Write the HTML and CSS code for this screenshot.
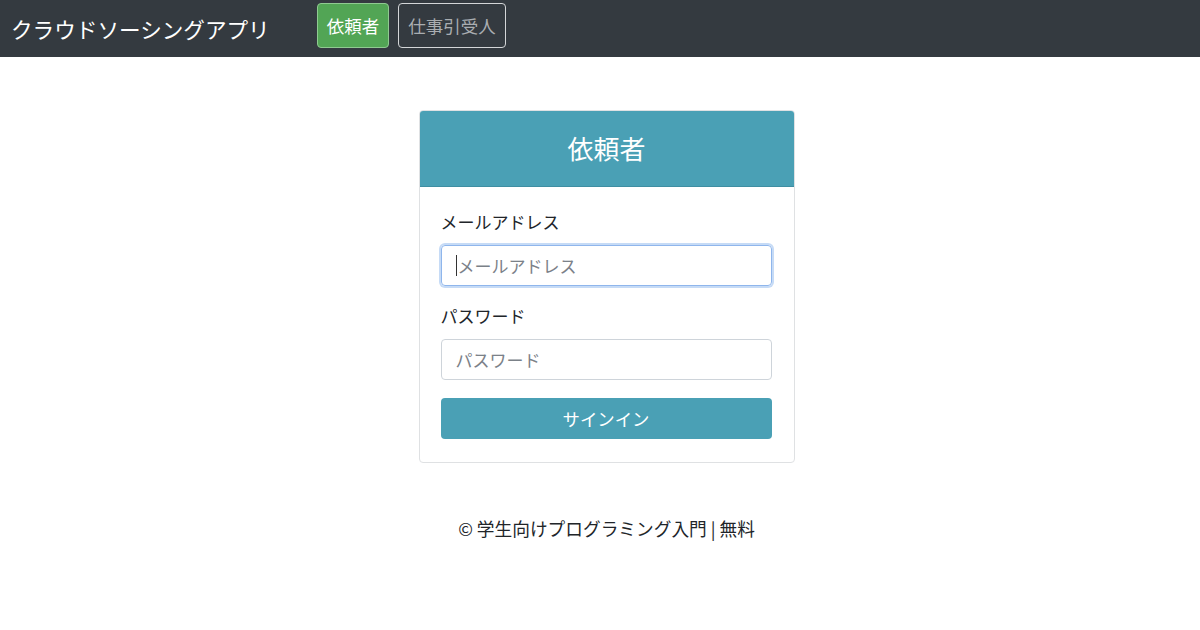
FILE: index.html
```html
<!DOCTYPE html>
<html lang="ja">
<head>
    <meta charset="UTF-8">
    <meta name="viewport" content="width=device-width, initial-scale=1.0">
    <title>クラウドソーシングアプリ</title>
    <link rel="stylesheet" href="styles.css">
</head>
<body>
    <nav class="navbar">
        <a class="brand" href="#">クラウドソーシングアプリ</a>
        <div class="nav-buttons">
            <a class="btn btn-success" href="#">依頼者</a>
            <a class="btn btn-outline" href="#">仕事引受人</a>
        </div>
    </nav>

    <main class="content">
        <div class="card">
            <div class="card-header">依頼者</div>
            <form class="card-body">
                <label class="form-label" for="email">メールアドレス</label>
                <div class="input focus">
                    <span class="caret"></span>
                    <span class="placeholder">メールアドレス</span>
                </div>
                <label class="form-label" for="password">パスワード</label>
                <div class="input">
                    <span class="placeholder">パスワード</span>
                </div>
                <button class="btn-signin" type="button">サインイン</button>
            </form>
        </div>

        <footer class="footer">© 学生向けプログラミング入門 | 無料</footer>
    </main>
</body>
</html>
```

FILE: styles.css
```css
:root {
    --dark: #343a40;
    --info: #4aa0b5;
    --success: #52a555;
    --text: #212529;
}

* {
    margin: 0;
    padding: 0;
    box-sizing: border-box;
}

body {
    font-family: "Noto Sans CJK JP", "Noto Sans", sans-serif;
    background: #fff;
    color: var(--text);
    width: 1200px;
    height: 630px;
    overflow: hidden;
}

/* top bar */
.navbar {
    height: 57px;
    background: var(--dark);
    display: flex;
    align-items: center;
    padding: 0 11px;
}

.brand {
    color: #fff;
    text-decoration: none;
    font-size: 21.6px;
    margin-right: 47px;
}

.nav-buttons {
    display: flex;
    gap: 9px;
    align-items: center;
    margin-top: -7px;
}

.btn {
    display: inline-flex;
    align-items: center;
    justify-content: center;
    height: 45px;
    padding: 0 9px;
    border-radius: 4px;
    font-size: 17.5px;
    text-decoration: none;
}

.btn-success {
    background: var(--success);
    border: 1px solid #8fca91;
    color: #fff;
}

.btn-outline {
    border: 1px solid #d4d6d8;
    color: #a9adb1;
}

/* card */
.content {
    display: flex;
    flex-direction: column;
    align-items: center;
    padding: 53px 0 0 13px;
}

.card {
    width: 376px;
    border: 1px solid #dfe1e3;
    border-radius: 4px;
    overflow: hidden;
}

.card-header {
    height: 76px;
    padding-bottom: 3px;
    background: var(--info);
    color: #fff;
    font-size: 26px;
    display: flex;
    align-items: center;
    justify-content: center;
    border-bottom: 1px solid #3f8ea2;
}

.card-body {
    padding: 23px 22px 23px 21px;
    display: flex;
    flex-direction: column;
}

.form-label {
    font-size: 17px;
    line-height: 24px;
    margin-bottom: 11px;
}

.input {
    height: 41px;
    border: 1px solid #ced4da;
    border-radius: 4px;
    display: flex;
    align-items: center;
    padding: 0 14px;
    margin-bottom: 18px;
    font-size: 17px;
}

.input.focus {
    border-color: #8fb6ec;
    box-shadow: 0 0 0 2px #c6dbf6;
}

.caret {
    width: 1px;
    height: 21px;
    background: #333;
    margin-right: 1px;
}

.placeholder {
    color: #7b8188;
}

.btn-signin {
    height: 41px;
    background: var(--info);
    border: none;
    border-radius: 4px;
    color: #fff;
    font-family: inherit;
    font-size: 17.4px;
}

.footer {
    margin-top: 52px;
    font-size: 17.7px;
}
```
